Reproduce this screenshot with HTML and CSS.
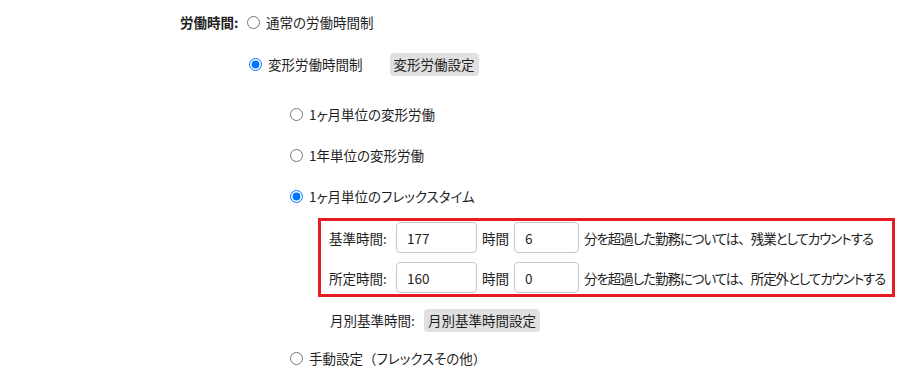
FILE: index.html
```html
<!DOCTYPE html>
<html lang="ja">
<head>
<meta charset="utf-8">
<link rel="stylesheet" href="styles.css">
</head>
<body>
<div class="page">
  <div class="row row1">
    <span class="field-label">労働時間:</span>
    <label class="opt"><input type="radio" name="wt"><span>通常の労働時間制</span></label>
  </div>
  <div class="row row2">
    <label class="opt"><input type="radio" name="wt" checked><span>変形労働時間制</span></label>
    <button class="btn btn-hen">変形労働設定</button>
  </div>
  <div class="sub">
    <div class="row row3">
      <label class="opt"><input type="radio" name="sub"><span>1ヶ月単位の変形労働</span></label>
    </div>
    <div class="row row4">
      <label class="opt"><input type="radio" name="sub"><span>1年単位の変形労働</span></label>
    </div>
    <div class="row row5">
      <label class="opt"><input type="radio" name="sub" checked><span>1ヶ月単位のフレックスタイム</span></label>
    </div>
    <div class="flex-box">
      <div class="flex-row">
        <span class="flex-label">基準時間:</span>
        <input class="inp inp-h" type="text" value="177">
        <span class="unit">時間</span>
        <input class="inp inp-m" type="text" value="6">
        <span class="note">分を超過した勤務については<span class="full">、</span>残業としてカウントする</span>
      </div>
      <div class="flex-row">
        <span class="flex-label">所定時間:</span>
        <input class="inp inp-h" type="text" value="160">
        <span class="unit">時間</span>
        <input class="inp inp-m" type="text" value="0">
        <span class="note">分を超過した勤務については<span class="full">、</span>所定外としてカウントする</span>
      </div>
    </div>
    <div class="row row-month">
      <span class="month-label">月別基準時間:</span>
      <button class="btn">月別基準時間設定</button>
    </div>
    <div class="row row-last">
      <label class="opt"><input type="radio" name="sub"><span>手動設定<span class="full">（</span>フレックスその他<span class="full">）</span></span></label>
    </div>
  </div>
</div>
</body>
</html>
```
FILE: styles.css
```css
* { box-sizing: border-box; }
html, body { margin: 0; padding: 0; background: #fff; }
body {
  font-family: "Noto Sans CJK JP", "Noto Sans", sans-serif;
  font-size: 13.5px;
  color: #1e1e1e;
  font-feature-settings: "palt";
  width: 897px;
  height: 372px;
  overflow: hidden;
}
.full { font-feature-settings: normal; }
.page { padding-top: 10px; }
.row {
  display: flex;
  align-items: center;
  height: 24px;
}
.row > *, .flex-row > * { flex-shrink: 0; }
.row1 { padding-left: 180px; }
.field-label {
  font-weight: bold;
  width: 67px;
}
.opt {
  display: flex;
  align-items: center;
  gap: 6px;
  white-space: nowrap;
}
.opt input[type="radio"] {
  margin: 0;
  width: 13px;
  height: 13px;
}
.row2 { margin-top: 18px; padding-left: 249px; }
.btn {
  font: inherit;
  font-feature-settings: "palt";
  color: #1e1e1e;
  background: #e0e0e0;
  border: none;
  border-radius: 4px;
  height: 23px;
  padding: 0 4px;
  line-height: 23px;
  white-space: nowrap;
}
.btn-hen { margin-left: 27px; }
.sub { padding-left: 290px; }
.row3 { margin-top: 26px; }
.row4 { margin-top: 17px; }
.row5 { margin-top: 17px; }
.flex-box {
  margin-top: 10px;
  margin-left: 28px;
  width: 577px;
  border: 3px solid #e51c23;
  padding: 1px 6px 1px 8px;
  display: flex;
  flex-direction: column;
  gap: 9px;
}
.flex-row {
  display: flex;
  align-items: center;
  height: 31px;
  white-space: nowrap;
}
.flex-label { width: 67px; }
.inp {
  font: inherit;
  font-size: 13.5px;
  color: #1e1e1e;
  height: 31px;
  border: 1px solid #c8c8c8;
  border-radius: 4px;
  padding: 0 10px;
  outline: none;
}
.inp-h { width: 81px; }
.inp-m { width: 65px; }
.unit { margin: 0 5px; }
.note { margin-left: 5px; letter-spacing: -1.05px; }
.row-month { margin-top: 11px; padding-left: 40px; }
.month-label { width: 94px; }
.row-last { margin-top: 14px; }
```
